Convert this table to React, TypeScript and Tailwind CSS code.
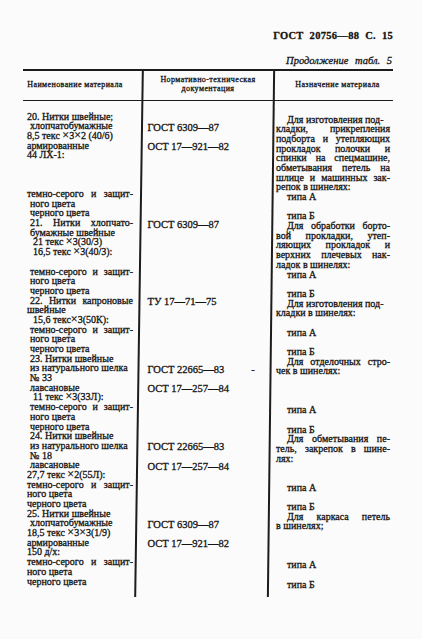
import React from "react";

// one row of the table body = one typeset line in each of the three columns
// markers: "=" justify the line, ">" indent, "~" stray mark after the text
const rows: [string, string, string][] = [
  ["20. Нитки швейные;", "", ">Для изготовления под-"],
  [">хлопчатобумажные", "ГОСТ 6309—87", "=кладки, прикрепления"],
  ["8,5 текс ×3×2 (40/6)", "", "=подборта и утепляющих"],
  ["армированные", "ОСТ 17—921—82", "=прокладок полочки и"],
  ["44 ЛХ-1:", "", "=спинки на спецмашине,"],
  ["", "", "=обметывания петель на"],
  ["", "", "=шлице и машинных зак-"],
  ["", "", "репок в шинелях:"],
  ["=темно-серого и защит-", "", ">типа А"],
  [">ного цвета", "", ""],
  [">черного цвета", "", ">типа Б"],
  ["=>21. Нитки хлопчато-", "ГОСТ 6309—87", "=>Для обработки борто-"],
  [">бумажные швейные", "", "=вой прокладки, утеп-"],
  [">>21 текс ×3(30/3)", "", "=ляющих прокладок и"],
  [">>16,5 текс ×3(40/3):", "", "=верхних плечевых нак-"],
  ["", "", "ладок в шинелях:"],
  ["=>темно-серого и защит-", "", ">типа А"],
  [">ного цвета", "", ""],
  [">черного цвета", "", ">типа Б"],
  ["=>22. Нитки капроновые", "ТУ 17—71—75", ">Для изготовления под-"],
  ["швейные", "", "кладки в шинелях:"],
  [">>15,6 текс×3(50К):", "", ""],
  ["=>темно-серого и защит-", "", ">типа А"],
  [">ного цвета", "", ""],
  [">черного цвета", "", ">типа Б"],
  [">23. Нитки швейные", "", "=>Для отделочных стро-"],
  [">из натурального шелка", "ГОСТ 22665—83~", "чек в шинелях:"],
  [">№ 33", "", ""],
  [">лавсановые", "ОСТ 17—257—84", ""],
  [">>11 текс ×3(33Л):", "", ""],
  ["=>темно-серого и защит-", "", ">типа А"],
  [">ного цвета", "", ""],
  [">черного цвета", "", ">типа Б"],
  [">24. Нитки швейные", "", "=>Для обметывания пе-"],
  [">из натурального шелка", "ГОСТ 22665—83", "=тель, закрепок в шине-"],
  [">№ 18", "", "лях:"],
  [">лавсановые", "ОСТ 17—257—84", ""],
  ["27,7 текс ×2(55Л):", "", ""],
  ["=темно-серого и защит-", "", ">типа А"],
  ["ного цвета", "", ""],
  ["черного цвета", "", ">типа Б"],
  ["25. Нитки швейные", "", "=>Для каркаса петель"],
  [">хлопчатобумажные", "ГОСТ 6309—87", "в шинелях;"],
  ["18,5 текс ×3×3(1/9)", "", ""],
  ["армированные", "ОСТ 17—921—82", ""],
  ["150 д/х:", "", ""],
  ["=темно-серого и защит-", "", ">типа А"],
  ["ного цвета", "", ""],
  ["черного цвета", "", ">типа Б"],
];

function Text({ s }: { s: string }) {
  const parts = s.split("×");
  return (
    <>
      {parts.map((p, i) => (
        <React.Fragment key={i}>
          {i > 0 && <span className="text-[12px] leading-[0]">×</span>}
          {p}
        </React.Fragment>
      ))}
    </>
  );
}

function Line({ text, col }: { text: string; col: number }) {
  let s = text;
  let justify = false;
  let indent = 0;
  let mark = false;
  if (s.startsWith("=")) {
    justify = true;
    s = s.slice(1);
  }
  while (s.startsWith(">")) {
    indent++;
    s = s.slice(1);
  }
  if (s.endsWith("~")) {
    mark = true;
    s = s.slice(0, -1);
  }

  let indentCls = "";
  if (col === 2 && indent > 0) indentCls = "pl-[11px]";
  if (col === 0 && indent === 1) indentCls = "pl-[3px]";
  if (col === 0 && indent === 2) indentCls = "pl-[6px]";

  return (
    <div
      className={`h-[9.7px] leading-[9.7px] ${indentCls} ${
        justify ? "text-justify [text-align-last:justify]" : "whitespace-nowrap"
      } ${col === 1 ? "text-[10.5px]" : "text-[10px]"}`}
    >
      {s ? <Text s={s} /> : "\u00a0"}
      {mark && <span className="ml-[27px]">-</span>}
    </div>
  );
}

export default function App() {
  return (
    <div className="h-[639px] w-[422px] overflow-hidden bg-[#fbfbfb] font-['Liberation_Serif',serif] text-[#141414] [-webkit-text-stroke:0.3px]">
      <div className="pl-[23px] pr-[29px] pt-[30px]">
        <div className="text-right text-[10.5px] font-bold leading-[12px] tracking-[0.3px] [word-spacing:3px]">
          ГОСТ 20756—88 С. 15
        </div>
        <div className="mt-[13px] pr-[1px] text-right text-[10.5px] italic leading-[12px] [word-spacing:4px]">
          Продолжение табл. 5
        </div>

        {/* table: header row, rule, body; the two dividers lean a little, as in the scan */}
        <div className="mt-[1.5px] grid grid-cols-[115px_1.5px_130px_1.5px_122px] grid-rows-[29px_1.5px_auto] border-t-2 border-[#1c1c1c]">
          <div className="col-start-1 row-start-1 flex items-center justify-center pr-[11px] text-[8px] tracking-[0.4px]">
            Наименование материала
          </div>
          <div className="col-start-3 row-start-1 flex flex-col items-center justify-center pl-[7px] text-[8px] leading-[8.6px] tracking-[0.4px]">
            <span>Нормативно-техническая</span>
            <span>документация</span>
          </div>
          <div className="col-start-5 row-start-1 flex items-center justify-center pl-[11px] text-[8px] tracking-[0.4px]">
            Назначение материала
          </div>

          <div className="col-span-5 col-start-1 row-start-2 bg-[#1c1c1c]" />

          <div className="col-start-2 row-span-3 row-start-1 -skew-x-[0.83deg] bg-[#1c1c1c]" />
          <div className="col-start-4 row-span-3 row-start-1 -skew-x-[0.68deg] bg-[#1c1c1c]" />

          <div className="col-start-1 row-start-3 flex flex-col pb-[10.7px] pl-[4px] pr-[5px] pt-[10.5px]">
            {rows.map((r, i) => (
              <Line key={i} text={r[0]} col={0} />
            ))}
          </div>
          <div className="col-start-3 row-start-3 flex flex-col pb-[9.2px] pl-[8px] pt-[12px]">
            {rows.map((r, i) => (
              <Line key={i} text={r[1]} col={1} />
            ))}
          </div>
          <div className="col-start-5 row-start-3 flex flex-col pb-[7.7px] pl-[5px] pr-[3px] pt-[13.5px]">
            {rows.map((r, i) => (
              <Line key={i} text={r[2]} col={2} />
            ))}
          </div>
        </div>
      </div>
    </div>
  );
}
